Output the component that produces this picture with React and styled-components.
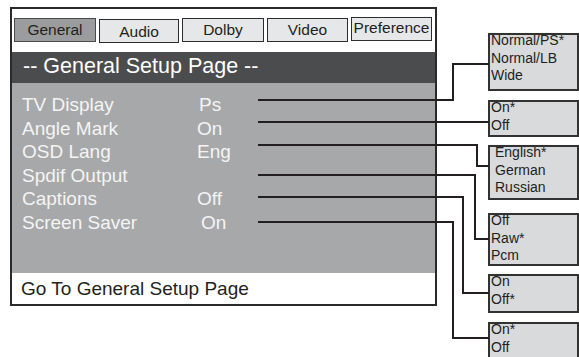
import React from "react";
import styled, { createGlobalStyle } from "styled-components";

const tabs = [
  { name: "General", active: true, width: 82, drop: 1 },
  { name: "Audio", width: 80, drop: 2, shift: 1 },
  { name: "Dolby", width: 82, drop: 1 },
  { name: "Video", width: 81, drop: 1 },
  { name: "Preference", width: 81, drop: 0, shift: -1 },
];

const settings = [
  { label: "TV Display", value: "Ps", nudge: 2 },
  { label: "Angle Mark", value: "On", nudge: 0 },
  { label: "OSD Lang", value: "Eng", nudge: -1 },
  { label: "Spdif Output", value: "", nudge: 0 },
  { label: "Captions", value: "Off", nudge: 0 },
  { label: "Screen Saver", value: "On", nudge: 4 },
];

const choices = [
  { items: ["Normal/PS*", "Normal/LB", "Wide"], height: 58, gap: 0 },
  { items: ["On*", "Off"], height: 37, gap: 9 },
  { items: ["English*", "German", "Russian"], height: 55, gap: 8, inset: 5 },
  { items: ["Off", "Raw*", "Pcm"], height: 53, gap: 13 },
  { items: ["On", "Off*"], height: 39, gap: 8 },
  { items: ["On*", "Off"], height: 42, gap: 9 },
];

const connectors = [
  "M258 100 H453 V64 H489",
  "M258 122 H489",
  "M258 145 H477 V166 H489",
  "M258 175 H475 V239 H489",
  "M258 197 H463 V293 H489",
  "M258 222 H453 V338 H489",
];

const App = () => {
  return (
    <Page>
      <GlobalStyle />
      <Panel>
        <TabBar>
          {tabs.map((tab) => (
            <Tab
              key={tab.name}
              $active={tab.active}
              $width={tab.width}
              $drop={tab.drop}
              $shift={tab.shift || 0}
            >
              {tab.name}
            </Tab>
          ))}
        </TabBar>
        <Header>-- General Setup Page --</Header>
        <SettingsList>
          {settings.map((row) => (
            <SettingRow key={row.label}>
              <Label>{row.label}</Label>
              <Value $nudge={row.nudge}>{row.value}</Value>
            </SettingRow>
          ))}
        </SettingsList>
        <Footer>Go To General Setup Page</Footer>
      </Panel>

      <Choices>
        {choices.map((box, i) => (
          <ChoiceBox key={i} $height={box.height} $gap={box.gap} $inset={box.inset || 1}>
            {box.items.map((item) => (
              <ChoiceItem key={item}>{item}</ChoiceItem>
            ))}
          </ChoiceBox>
        ))}
      </Choices>

      <Wires width="579" height="357" viewBox="0 0 579 357">
        {connectors.map((d) => (
          <path key={d} d={d} fill="none" stroke="#231f20" strokeWidth="2" />
        ))}
      </Wires>
    </Page>
  );
};

const GlobalStyle = createGlobalStyle`
  body {
    margin: 0;
    background: #fff;
    overflow: hidden;
    font-family: "Liberation Sans", Arial, sans-serif;
  }
`;

const Page = styled.div`
  position: relative;
  display: flex;
  align-items: flex-start;
  width: 579px;
  height: 357px;
  overflow: hidden;
`;

const Panel = styled.div`
  box-sizing: border-box;
  width: 427px;
  margin: 7px 0 0 10px;
  border: 2px solid #2b2a2b;
  display: flex;
  flex-direction: column;
`;

const TabBar = styled.div`
  display: flex;
  align-items: flex-start;
  gap: 3px;
  height: 43px;
  padding: 9px 0 0 2px;
  box-sizing: border-box;
  background: #fff;
`;

const Tab = styled.div`
  box-sizing: border-box;
  width: ${(p) => p.$width}px;
  height: 24px;
  margin-top: ${(p) => p.$shift}px;
  padding-top: ${(p) => p.$drop}px;
  border: 1px solid ${(p) => (p.$active ? "#4a4a4a" : "#2e2d2e")};
  background: ${(p) => (p.$active ? "#9b9c9e" : "#e6e7e8")};
  color: #231f20;
  font-size: 15.5px;
  line-height: 20px;
  text-align: center;
  white-space: nowrap;
`;

const Header = styled.div`
  height: 31px;
  padding-left: 11px;
  background: #4b4c4e;
  color: #fff;
  font-size: 21.5px;
  line-height: 29px;
  white-space: nowrap;
`;

const SettingsList = styled.div`
  height: 190px;
  box-sizing: border-box;
  padding: 10px 0 0 10px;
  background: #a7a8aa;
`;

const SettingRow = styled.div`
  display: grid;
  grid-template-columns: 175px auto;
  color: #f4f4f4;
  font-size: 19px;
  line-height: 23.5px;
  white-space: nowrap;
`;

const Label = styled.span``;

const Value = styled.span`
  padding-left: ${(p) => p.$nudge}px;
`;

const Footer = styled.div`
  height: 31px;
  padding-left: 9px;
  background: #fff;
  color: #231f20;
  font-size: 19px;
  line-height: 31px;
  white-space: nowrap;
`;

const Choices = styled.div`
  display: flex;
  flex-direction: column;
  margin-left: 51px;
  padding-top: 33px;
`;

const ChoiceBox = styled.div`
  box-sizing: border-box;
  width: 91px;
  height: ${(p) => p.$height}px;
  margin-top: ${(p) => p.$gap}px;
  padding-left: ${(p) => p.$inset}px;
  border: 2px solid #333233;
  background: #d9dadc;
  overflow: hidden;
`;

const ChoiceItem = styled.div`
  color: #231f20;
  font-size: 14px;
  line-height: 17.5px;
  white-space: nowrap;

  &:first-child {
    margin-top: -3px;
  }
`;

const Wires = styled.svg`
  position: absolute;
  top: 0;
  left: 0;
  pointer-events: none;
`;

export default App;
